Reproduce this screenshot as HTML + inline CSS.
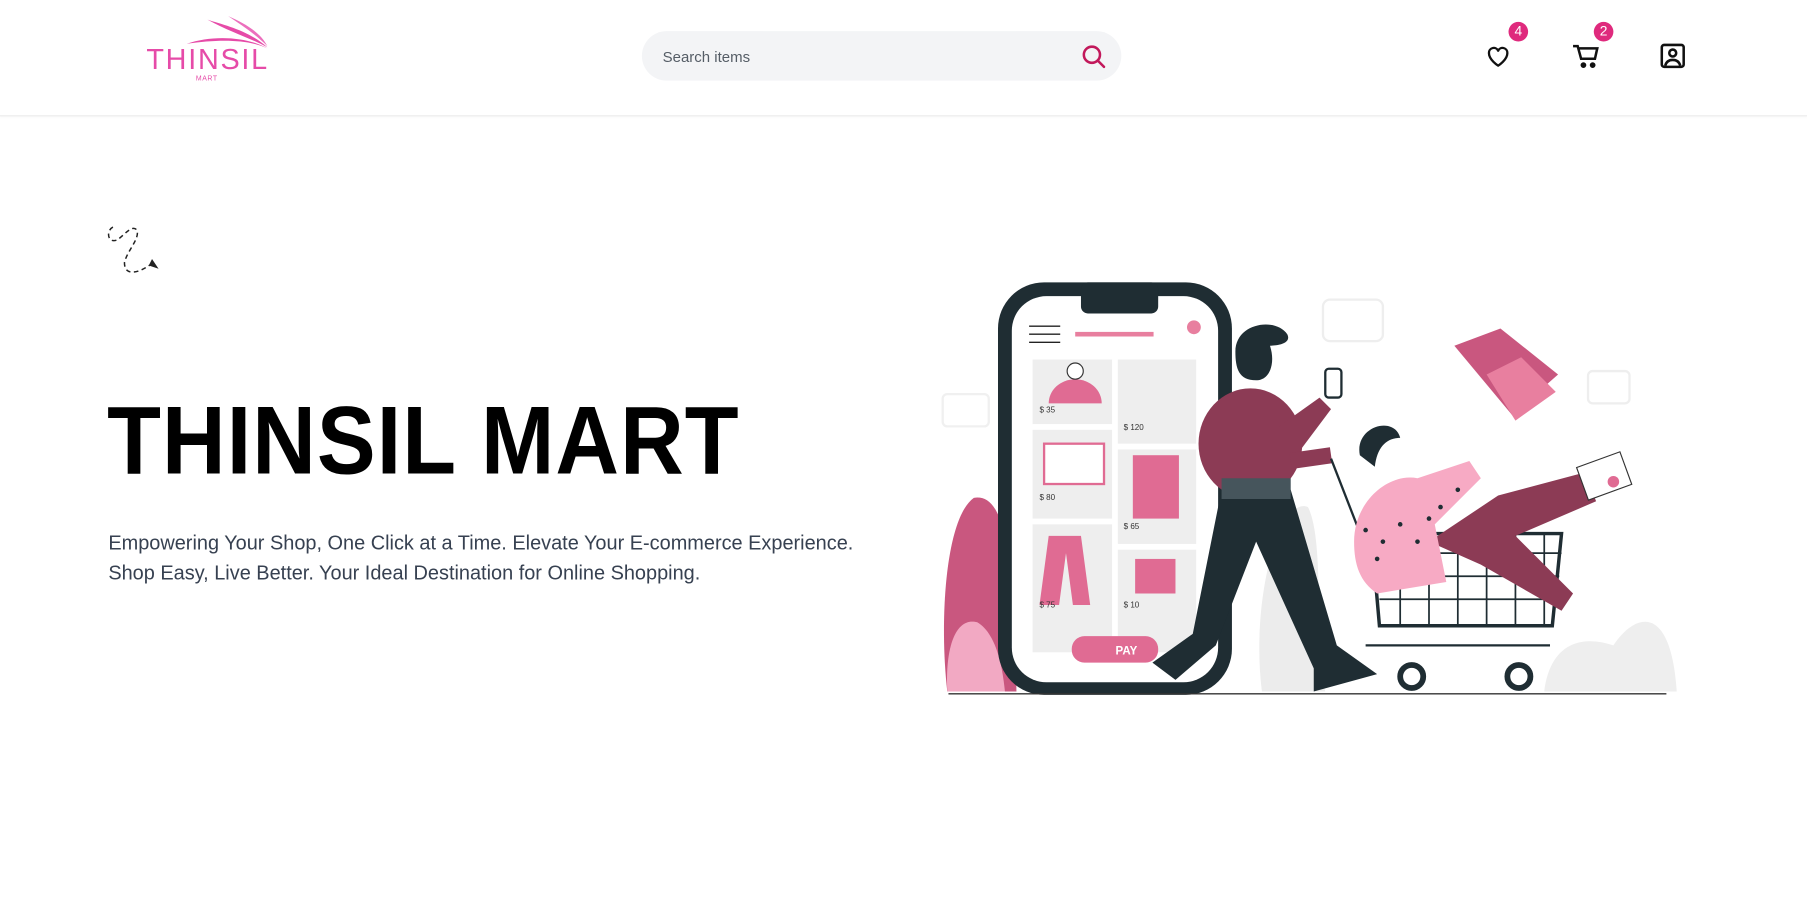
<!DOCTYPE html>
<html><head><meta charset="utf-8"><style>
html,body{margin:0;padding:0;background:#fff;overflow:hidden;width:1807px;height:917px}
#w{position:absolute;left:0;top:0;width:1568px;height:796px;transform:scale(1.15242);transform-origin:0 0;font-family:"Liberation Sans",sans-serif}
.hdr{position:absolute;left:0;top:0;width:1568px;height:100px;border-bottom:1px solid #ececec;box-shadow:0 1px 2px rgba(0,0,0,.03)}
.logo{position:absolute;left:127px;top:38px;color:#e64ba8;font-size:25px;letter-spacing:1.5px;font-weight:400}
.mart{position:absolute;left:170px;top:66px;color:#e64ba8;font-size:6px;letter-spacing:.5px}
.search{position:absolute;left:557px;top:27px;width:416px;height:43px;border-radius:22px;background:#f3f4f6}
.search span{position:absolute;left:18px;top:15px;font-size:13px;color:#555d66}
.badge{position:absolute;width:17px;height:17px;border-radius:50%;background:#df2a7d;color:#fff;font-size:12px;text-align:center;line-height:17px}
h1{position:absolute;left:93px;top:334px;margin:0;font-size:84px;font-weight:700;color:#000;white-space:nowrap;transform:scaleX(.91);transform-origin:0 0;letter-spacing:1px}
.sub{position:absolute;left:94px;top:458px;font-size:17.3px;line-height:26px;color:#374151;white-space:nowrap}
</style></head><body><div id="w">
<div class="hdr">
 <svg style="position:absolute;left:160px;top:12px" width="75" height="32" viewBox="0 0 75 32"><path d="M2 26 C25 18 55 20 72 30 C55 22 30 22 2 26Z" fill="#e64ba8"/><path d="M20 5 C35 10 55 14 72 29 C55 20 40 16 20 5Z" fill="#e64ba8"/><path d="M38 2 C52 8 66 16 72 28 C62 18 50 10 38 2Z" fill="#ec6fbd"/></svg>
 <div class="logo">THINSIL</div><div class="mart">MART</div>
 <div class="search"><span>Search items</span>
  <svg style="position:absolute;left:380px;top:10px" width="24" height="24" viewBox="0 0 24 24" fill="none" stroke="#c2185b" stroke-width="2.2"><circle cx="10.5" cy="10.5" r="7"/><path d="M15.5 15.5L21 21" stroke-linecap="round"/></svg></div>
 <svg style="position:absolute;left:1288px;top:37px" width="24" height="24" viewBox="0 0 24 24" fill="none" stroke="#111" stroke-width="2"><path d="M12 20s-8-5-8-11a4.2 4.2 0 0 1 8-2 4.2 4.2 0 0 1 8 2c0 6-8 11-8 11z" stroke-linejoin="round"/></svg>
 <div class="badge" style="left:1309px;top:19px">4</div>
 <svg style="position:absolute;left:1364px;top:37px" width="26" height="24" viewBox="0 0 26 24" fill="none" stroke="#111" stroke-width="2.2"><path d="M1 3h4l3 11h12l2-9H6"/><circle cx="10" cy="19.5" r="1.4" fill="#111"/><circle cx="18" cy="19.5" r="1.4" fill="#111"/></svg>
 <div class="badge" style="left:1383px;top:19px">2</div>
 <svg style="position:absolute;left:1440px;top:37px" width="23" height="23" viewBox="0 0 23 23" fill="none" stroke="#111" stroke-width="2.2"><rect x="2" y="2" width="19" height="19" rx="2"/><circle cx="11.5" cy="9" r="3"/><path d="M5 20c1-4 4-5 6.5-5s5.5 1 6.5 5"/></svg>
</div>
<svg style="position:absolute;left:90px;top:192px" width="52" height="52" viewBox="0 0 52 52" fill="none" stroke="#222" stroke-width="1.3" stroke-dasharray="4 3"><path d="M8 5C2 8 3 20 12 16 18 12 25 2 29 8 31 16 20 26 18 36 18 48 30 45 40 38"/><path d="M40 38l6 2-4-6z" fill="#222" stroke-dasharray="0"/></svg>
<h1>THINSIL MART</h1>
<div class="sub">Empowering Your Shop, One Click at a Time. Elevate Your E-commerce Experience.<br>Shop Easy, Live Better. Your Ideal Destination for Online Shopping.</div>
<svg style="position:absolute;left:0;top:0" width="1568" height="796" viewBox="0 0 1568 796">
 <path d="M822 600C815 540 820 450 845 432 870 428 880 470 882 600Z" fill="#c9577f"/>
 <path d="M822 600C820 560 830 535 848 540 865 550 870 580 872 600Z" fill="#f2a9c3"/>
 <path d="M1095 600C1085 520 1110 430 1135 440 1150 470 1140 560 1150 600Z" fill="#ececec"/>
 <path d="M1340 600C1345 560 1370 550 1400 560 1420 530 1450 525 1455 600Z" fill="#eeeeee"/>
 <rect x="1148" y="260" width="52" height="36" rx="6" fill="none" stroke="#eee" stroke-width="2"/>
 <rect x="818" y="342" width="40" height="28" rx="4" fill="none" stroke="#f0f0f0" stroke-width="2"/>
 <rect x="1378" y="322" width="36" height="28" rx="4" fill="none" stroke="#eee" stroke-width="2"/>
 <rect x="866" y="245" width="203" height="358" rx="40" fill="#1f2d33"/>
 <rect x="878" y="257" width="179" height="335" rx="30" fill="#fff"/>
 <rect x="938" y="245" width="67" height="27" rx="6" fill="#1f2d33"/>
 <path d="M893 283h27M893 290h27M893 297h27" stroke="#222" stroke-width="1.2"/>
 <rect x="933" y="288" width="68" height="4" fill="#e87f9f"/>
 <circle cx="1036" cy="284" r="6" fill="#e87f9f"/>
 <g fill="#eeeeee"><rect x="896" y="312" width="69" height="56"/><rect x="896" y="373" width="69" height="77"/><rect x="896" y="455" width="69" height="111"/><rect x="970" y="312" width="68" height="73"/><rect x="970" y="390" width="68" height="82"/><rect x="970" y="477" width="68" height="89"/></g>
 <g fill="#e06b93"><path d="M910 350a22 20 0 0 1 46 0z"/><rect x="906" y="385" width="52" height="35" fill="#fff" stroke="#e06b93" stroke-width="2"/><rect x="983" y="395" width="40" height="55"/><path d="M910 465h28l8 60h-15l-6-45-6 45h-17z"/><rect x="985" y="485" width="35" height="30"/><rect x="930" y="552" width="75" height="23" rx="11"/></g>
 <circle cx="933" cy="322" r="7" fill="#fff" stroke="#333"/>
 <text x="968" y="568" font-family="Liberation Sans" font-size="10" fill="#fff" font-weight="700">PAY</text>
 <g font-family="Liberation Sans" font-size="7" fill="#333"><text x="902" y="358">$ 35</text><text x="975" y="373">$ 120</text><text x="902" y="434">$ 80</text><text x="975" y="459">$ 65</text><text x="902" y="527">$ 75</text><text x="975" y="527">$ 10</text></g>
 <path d="M1060 425L1035 550 1000 575 1020 590 1055 560 1090 470 1140 580 1140 600 1195 585 1160 560 1120 425z" fill="#1f2d33"/>
 <ellipse cx="1085" cy="385" rx="45" ry="48" fill="#8c3b55"/>
 <rect x="1060" y="415" width="60" height="18" fill="#46555c"/>
 <path d="M1110 370l35 -25 10 10 -30 40z" fill="#8c3b55"/>
 <rect x="1150" y="320" width="14" height="25" rx="3" fill="#fff" stroke="#1f2d33" stroke-width="2"/>
 <path d="M1120 400l35 -5" stroke="#8c3b55" stroke-width="14"/>
 <path d="M1155 398l35 90" stroke="#1f2d33" stroke-width="2"/>
 <ellipse cx="1092" cy="315" rx="18" ry="20" fill="#fff"/>
 <path d="M1072 305c0-25 35-30 45-15 5 10-15 10-15 10 5 15 0 30-12 30-15 0-18-10-18-25z" fill="#1f2d33"/>
 <path d="M1190 463h165l-8 80h-150z" fill="none" stroke="#1f2d33" stroke-width="3"/>
 <path d="M1195 480h160M1195 500h158M1197 520h155M1215 463v80M1240 463v80M1265 463v80M1290 463v80M1315 463v80M1340 463v80" stroke="#1f2d33" stroke-width="1.5"/>
 <path d="M1185 560h160" stroke="#1f2d33" stroke-width="2"/>
 <circle cx="1225" cy="587" r="10" fill="#fff" stroke="#1f2d33" stroke-width="5"/>
 <circle cx="1318" cy="587" r="10" fill="#fff" stroke="#1f2d33" stroke-width="5"/>
 <path d="M1240 470l60 -40 75 -20 10 25 -70 30 50 50 -10 15 -70 -40z" fill="#8c3b55"/>
 <path d="M1175 470c0-35 30-60 55-55l45-15 10 15-40 40 10 50-60 10c-15-10-20-25-20-45z" fill="#f7aac4"/>
 <g fill="#1f2d33"><circle cx="1185" cy="460" r="2"/><circle cx="1200" cy="470" r="2"/><circle cx="1195" cy="485" r="2"/><circle cx="1215" cy="455" r="2"/><circle cx="1230" cy="470" r="2"/><circle cx="1250" cy="440" r="2"/><circle cx="1265" cy="425" r="2"/><circle cx="1240" cy="450" r="2"/></g>
 <circle cx="1205" cy="395" r="17" fill="#fff"/>
 <path d="M1180 395c-5-25 30-35 35-15-12 0-20 8-22 25z" fill="#1f2d33"/>
 <path d="M1262 300l40 -15 50 40 -40 35z" fill="#c9577f"/>
 <path d="M1290 325l30 -15 30 30 -35 25z" fill="#e87f9f"/>
 <rect x="1372" y="398" width="40" height="30" fill="#fff" stroke="#333" transform="rotate(-20 1392 413)"/>
 <circle cx="1400" cy="418" r="5" fill="#e06b93"/>
 <path d="M823 602H1446" stroke="#333" stroke-width="1.2"/>
</svg>
</div></body></html>
